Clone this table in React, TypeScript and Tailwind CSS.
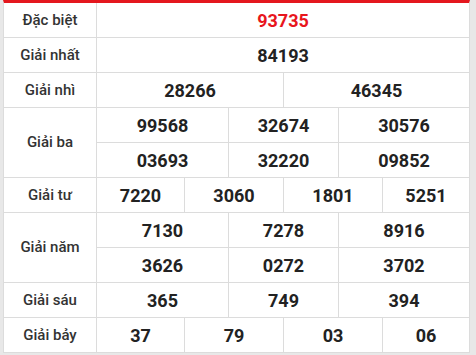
import React from 'react';

type Prize = {
  label: string;
  cols: string;
  rows: string[][];
  red?: boolean;
};

const prizes: Prize[] = [
  { label: 'Đặc biệt', cols: 'grid-cols-1', rows: [['93735']], red: true },
  { label: 'Giải nhất', cols: 'grid-cols-1', rows: [['84193']] },
  { label: 'Giải nhì', cols: 'grid-cols-[187px_1fr]', rows: [['28266', '46345']] },
  {
    label: 'Giải ba',
    cols: 'grid-cols-[132px_110px_1fr]',
    rows: [
      ['99568', '32674', '30576'],
      ['03693', '32220', '09852'],
    ],
  },
  { label: 'Giải tư', cols: 'grid-cols-[88px_99px_99px_1fr]', rows: [['7220', '3060', '1801', '5251']] },
  {
    label: 'Giải năm',
    cols: 'grid-cols-[132px_110px_1fr]',
    rows: [
      ['7130', '7278', '8916'],
      ['3626', '0272', '3702'],
    ],
  },
  { label: 'Giải sáu', cols: 'grid-cols-[132px_110px_1fr]', rows: [['365', '749', '394']] },
  { label: 'Giải bảy', cols: 'grid-cols-[88px_99px_99px_1fr]', rows: [['37', '79', '03', '06']] },
];

const App = () => {
  return (
    <div className="w-[476px] h-[355px] bg-[#e8e8e8] pl-[3px] font-['Roboto',sans-serif] overflow-hidden">
      <div className="w-[467px] bg-white border-t-[3px] border-t-[#e4171e] border-x border-x-[#dcdcdc]">
        {prizes.map((p) => (
          <div key={p.label} className="flex">
            {/* label */}
            <div className="w-[93px] shrink-0 flex items-center justify-center border-r border-b border-[#dcdcdc] text-[15px] font-medium text-[#333]">
              {p.label}
            </div>
            {/* numbers */}
            <div className="flex-1">
              {p.rows.map((row, i) => (
                <div key={i} className={`grid ${p.cols}`}>
                  {row.map((n, j) => (
                    <div
                      key={j}
                      className={`h-[35px] flex items-center justify-center border-b border-[#dcdcdc] text-[18px] font-bold ${
                        j < row.length - 1 ? 'border-r' : ''
                      } ${p.red ? 'text-[#e8161d]' : 'text-[#222]'}`}
                    >
                      {n}
                    </div>
                  ))}
                </div>
              ))}
            </div>
          </div>
        ))}
      </div>
    </div>
  );
};

export default App;
